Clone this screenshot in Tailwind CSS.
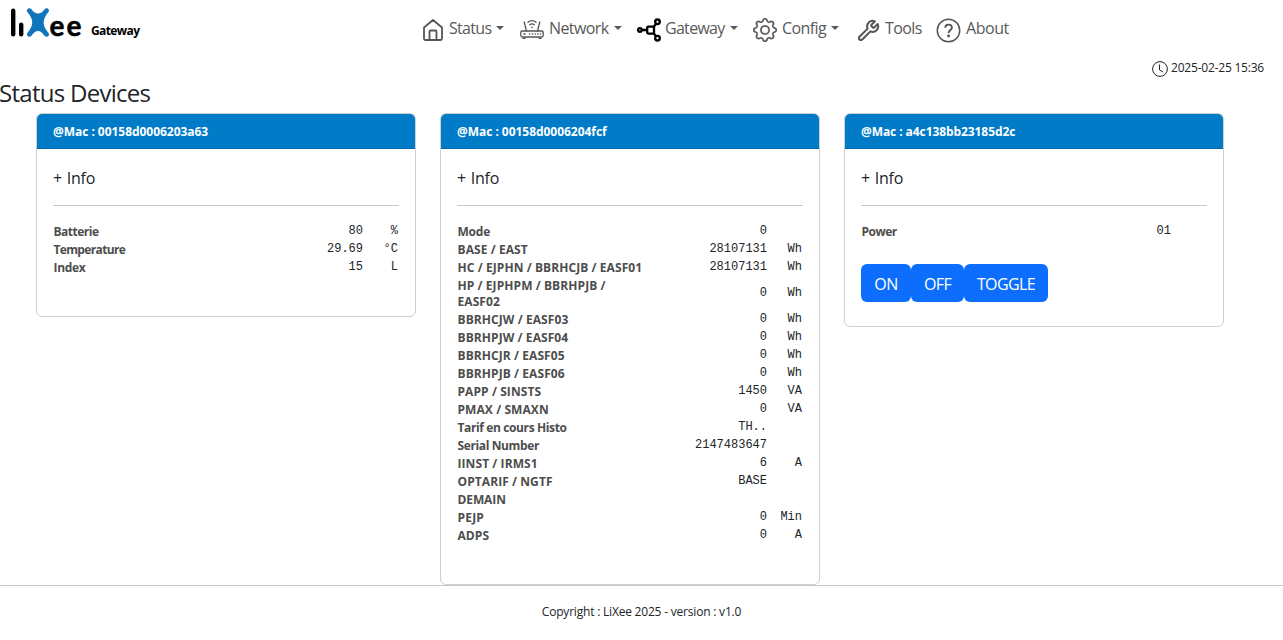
<!DOCTYPE html>
<html lang="en">
<head>
<meta charset="utf-8">
<title>LiXee Gateway</title>
<script src="https://cdn.jsdelivr.net/npm/@tailwindcss/browser@4"></script>
</head>
<body class="h-[640px] overflow-hidden bg-white font-['Open_Sans','Noto_Sans',sans-serif] text-[#212529]">
<header class="flex h-[60px] text-[#595959]">
  <div class="flex w-[422px] shrink-0">
    <svg class="ml-2 mt-1 h-9 w-[76px] shrink-0 overflow-visible" viewBox="8 4 76 36">
      <path d="M13.2 10.700V34.300M21.200 24.800V34.300" stroke="#000" stroke-width="4.400" stroke-linecap="round"/>
      <path d="M27 11.600C26 9 29.500 7 31.500 9.200C35.500 15 40.500 15 44.500 9.200C46.500 7 50 9 48.700 11.800C42 19.500 42 25.500 48.700 33.200C50 36 46.500 38 44.500 35.800C40.500 29.500 35.500 29.500 31.500 35.800C29.500 38 26 36 27.200 33.200C34 25.500 34 19.500 27 11.600Z" fill="#0f75bd"/>
      <text x="49.400" y="36" font-family="Lato" font-weight="700" font-size="28" textLength="32" fill="#000" stroke="#000" stroke-width=".5">ee</text>
    </svg>
    <span class="ml-[7px] mt-[22px] text-xs leading-[18px] font-bold tracking-[-0.6px] text-black">Gateway</span>
  </div>
  <nav class="flex text-base leading-6 tracking-[-0.6px]">
    <a class="flex w-[98px] pt-[17px]">
      <svg class="mt-0.5 mr-[5px] size-[22px] shrink-0" viewBox="0 0 22 22" fill="none" stroke="#555" stroke-width="1.800" stroke-linejoin="round"><path d="M2 8.500 11 1l9 7.500V19.500a1.500 1.500 0 0 1-1.500 1.500h-15A1.500 1.500 0 0 1 2 19.500ZM7.500 21v-8.500a1 1 0 0 1 1-1h5a1 1 0 0 1 1 1V21"/></svg>
      <span class="-mt-px tracking-[-0.7px]">Status</span><i class="mt-[9px] ml-[5px] h-0 border-x-4 border-t-4 border-x-transparent border-t-[#595959]"></i>
    </a>
    <a class="flex w-[117px] pt-[17px]">
      <svg class="mr-[5px] h-6 w-6 shrink-0" viewBox="0 0 24 24" fill="none" stroke="#555" stroke-width="1.300" stroke-linecap="round"><rect x=".8" y="14" width="22.400" height="6" rx="1.500"/><path d="M6.500 14 4.200 5M17.500 14l2.300-9M3 21.300h2M19 21.300h2M8 5.300c2-2.200 6-2.200 8 0M9.800 7.800c1.200-1.300 3.200-1.300 4.400 0"/><path d="M4 17h1M9.500 17h.2M12.300 17h.2M15.100 17h.2M17.800 17h.2M20.500 17h.1M12 10.300v.2" stroke-width="1.500"/></svg>
      <span class="-mt-px">Network</span><i class="mt-[9px] ml-[5px] h-0 border-x-4 border-t-4 border-x-transparent border-t-[#595959]"></i>
    </a>
    <a class="flex w-[116px] pt-[17px]">
      <svg class="mt-px mr-1 size-6 shrink-0" viewBox="0 0 24 24" fill="none" stroke="#000" stroke-width="2.300"><rect x="10.200" y="8.600" width="6.800" height="7" rx="1"/><circle cx="2.900" cy="12" r="1.800"/><circle cx="20.500" cy="3.800" r="2.300"/><circle cx="20.500" cy="20.200" r="2.300"/><path d="M5 12h5M16.500 9 19 6M16.500 15l2.500 3.200"/></svg>
      <span class="-mt-px tracking-[-0.7px]">Gateway</span><i class="mt-[9px] ml-[5px] h-0 border-x-4 border-t-4 border-x-transparent border-t-[#595959]"></i>
    </a>
    <a class="flex w-[105px] pt-[17px]">
      <svg class="mt-px mr-[5px] size-6 shrink-0" viewBox="0 0 16 16" fill="#555" stroke="#555" stroke-width=".15"><path d="M8 4.754a3.246 3.246 0 1 0 0 6.492 3.246 3.246 0 0 0 0-6.492M5.754 8a2.246 2.246 0 1 1 4.492 0 2.246 2.246 0 0 1-4.492 0"/><path d="M9.796 1.343c-.527-1.790-3.065-1.790-3.592 0l-.094.319a.873.873 0 0 1-1.255.520l-.292-.160c-1.640-.892-3.433.902-2.540 2.541l.159.292a.873.873 0 0 1-.520 1.255l-.319.094c-1.790.527-1.790 3.065 0 3.592l.319.094a.873.873 0 0 1 .520 1.255l-.160.292c-.892 1.640.901 3.434 2.541 2.540l.292-.159a.873.873 0 0 1 1.255.520l.094.319c.527 1.790 3.065 1.790 3.592 0l.094-.319a.873.873 0 0 1 1.255-.520l.292.160c1.640.893 3.434-.902 2.540-2.541l-.159-.292a.873.873 0 0 1 .520-1.255l.319-.094c1.790-.527 1.790-3.065 0-3.592l-.319-.094a.873.873 0 0 1-.520-1.255l.160-.292c.893-1.640-.902-3.433-2.541-2.540l-.292.159a.873.873 0 0 1-1.255-.520zm-2.633.283c.246-.835 1.428-.835 1.674 0l.094.319a1.873 1.873 0 0 0 2.693 1.115l.291-.160c.764-.415 1.600.420 1.184 1.185l-.159.292a1.873 1.873 0 0 0 1.116 2.692l.318.094c.835.246.835 1.428 0 1.674l-.319.094a1.873 1.873 0 0 0-1.115 2.693l.160.291c.415.764-.420 1.600-1.185 1.184l-.291-.159a1.873 1.873 0 0 0-2.693 1.116l-.094.318c-.246.835-1.428.835-1.674 0l-.094-.319a1.873 1.873 0 0 0-2.692-1.115l-.292.160c-.764.415-1.600-.420-1.184-1.185l.159-.291A1.873 1.873 0 0 0 1.945 8.930l-.319-.094c-.835-.246-.835-1.428 0-1.674l.319-.094A1.873 1.873 0 0 0 3.060 4.377l-.160-.292c-.415-.764.420-1.600 1.185-1.184l.292.159a1.873 1.873 0 0 0 2.692-1.115z"/></svg>
      <span class="-mt-px">Config</span><i class="mt-[9px] ml-[5px] h-0 border-x-4 border-t-4 border-x-transparent border-t-[#595959]"></i>
    </a>
    <a class="flex w-[78px] pt-[17px]">
      <svg class="mt-0.5 mr-[5px] size-[22px] shrink-0" viewBox="0 0 24 24" fill="none" stroke="#555" stroke-width="2.200" stroke-linejoin="round"><path d="M14.700 6.300a1 1 0 0 0 0 1.400l1.600 1.600a1 1 0 0 0 1.400 0l3.770-3.770a6 6 0 0 1-7.940 7.940l-6.910 6.910-2 2a2.120 2.120 0 0 1-3-3l8.910-8.910a6 6 0 0 1 7.940-7.940l-3.760 3.760z"/></svg>
      <span class="-mt-px">Tools</span>
    </a>
    <a class="flex pt-[17px]">
      <svg class="mt-px mr-[5px] size-[25px] shrink-0" viewBox="0 0 25 25" fill="none" stroke="#555" stroke-width="1.500"><circle cx="12.500" cy="12.500" r="11.200"/><path d="M9.300 9.800C9.300 5.700 15.900 5.700 15.900 9.400C15.900 12 12.600 11.900 12.600 15" stroke-width="1.900"/><circle cx="12.600" cy="18" r=".7" fill="#555"/></svg>
      <span class="-mt-px tracking-[-0.45px]">About</span>
    </a>
  </nav>
</header>
<div class="flex h-[18px] items-start justify-end pr-[19px] text-xs leading-4 tracking-[-0.21px]">
  <svg class="mt-px mr-[3px] size-4" viewBox="0 0 16 16" fill="none" stroke="#212529"><circle cx="8" cy="8" r="7.400"/><path d="M7.500 3.500V9l3.600 2"/></svg>
  <span>2025-02-25 15:36</span>
</div>
<h1 class="-ml-px h-[35px] text-2xl leading-[29px] tracking-[-0.72px]">Status Devices</h1>
<main class="flex h-[472px] items-start gap-6 pl-9">
  <section class="h-[204px] w-[380px] rounded-md border border-[#d0d0d0]">
    <h2 class="h-[35px] rounded-t-[5px] border-b border-[#0069a9] bg-[#007bc8] pl-4 text-xs leading-[35px] font-bold tracking-[-0.04px] text-white">@Mac : 00158d0006203a63</h2>
    <div class="px-4 pt-4">
      <p class="box-content h-[40px] border-b border-[#c8c8c8] text-base leading-[27px] tracking-[-0.25px]">+&nbsp;<span class="ml-px">Info</span></p>
      <div id="r1" class="pt-[17px]"></div>
    </div>
  </section>
  <section class="h-[472px] w-[380px] rounded-md border border-[#d0d0d0]">
    <h2 class="h-[35px] rounded-t-[5px] border-b border-[#0069a9] bg-[#007bc8] pl-4 text-xs leading-[35px] font-bold tracking-[-0.04px] text-white">@Mac : 00158d0006204fcf</h2>
    <div class="px-4 pt-4">
      <p class="box-content h-[40px] border-b border-[#c8c8c8] text-base leading-[27px] tracking-[-0.25px]">+&nbsp;<span class="ml-px">Info</span></p>
      <div id="r2" class="pt-[17px]"></div>
    </div>
  </section>
  <section class="h-[214px] w-[380px] rounded-md border border-[#d0d0d0]">
    <h2 class="h-[35px] rounded-t-[5px] border-b border-[#0069a9] bg-[#007bc8] pl-4 text-xs leading-[35px] font-bold tracking-[-0.08px] text-white">@Mac : a4c138bb23185d2c</h2>
    <div class="px-4 pt-4">
      <p class="box-content h-[40px] border-b border-[#c8c8c8] text-base leading-[27px] tracking-[-0.25px]">+&nbsp;<span class="ml-px">Info</span></p>
      <div id="r3" class="pt-[17px]"></div>
      <div class="mt-[23px] flex text-base leading-10 tracking-[-0.6px] text-white">
        <button class="h-[38px] w-[50px] rounded-md bg-[#0d6efd]">ON</button>
        <button class="h-[38px] w-[53px] rounded-md bg-[#0d6efd]">OFF</button>
        <button class="h-[38px] w-[84px] rounded-md bg-[#0d6efd]">TOGGLE</button>
      </div>
    </div>
  </section>
</main>
<footer class="border-t border-[#c8c8c8] pt-[17px] text-center text-xs leading-[18px] tracking-[-0.2px]">Copyright : LiXee 2025 - version : v1.0</footer>
<script>
const data = {
  r1: [['Batterie','80','%'],['Temperature','29.69','°C'],['Index','15','L']],
  r2: [['Mode','0',''],['BASE / EAST','28107131','Wh'],['HC / EJPHN / BBRHCJB / EASF01','28107131','Wh'],['HP / EJPHPM / BBRHPJB /<br>EASF02','0','Wh'],['BBRHCJW / EASF03','0','Wh'],['BBRHPJW / EASF04','0','Wh'],['BBRHCJR / EASF05','0','Wh'],['BBRHPJB / EASF06','0','Wh'],['PAPP / SINSTS','1450','VA'],['PMAX / SMAXN','0','VA'],['Tarif en cours Histo','TH..',''],['Serial Number','2147483647',''],['IINST / IRMS1','6','A'],['OPTARIF / NGTF','BASE',''],['DEMAIN','',''],['PEJP','0','Min'],['ADPS','0','A']],
  r3: [['Power','01','']]
};
const tight = { Temperature: 'tracking-[-0.65px]', Batterie: 'tracking-[-0.5px]', Power: 'tracking-[-0.5px]', 'Tarif en cours Histo': 'tracking-[-0.38px]', 'Serial Number': 'tracking-[-0.38px]', Index: 'tracking-[-0.3px]', Mode: 'tracking-[-0.2px]', DEMAIN: 'tracking-[-0.1px]', PEJP: 'tracking-[0.2px]' };
for (const id in data) document.getElementById(id).innerHTML = data[id].map(([label, value, unit]) =>
  `<div class="flex items-center py-px text-xs leading-4"><b class="w-[205px] pl-[0.5px] whitespace-nowrap ${tight[label] || 'tracking-[0.08px]'} text-[#4d4d4d]">${label}</b><span class="w-[105px] pb-0.5 text-right font-['Liberation_Mono',monospace] leading-[14px]">${value}</span><span class="w-[35px] pb-0.5 text-right font-['Liberation_Mono',monospace] leading-[14px]">${unit}</span></div>`).join('');
</script>
</body>
</html>
